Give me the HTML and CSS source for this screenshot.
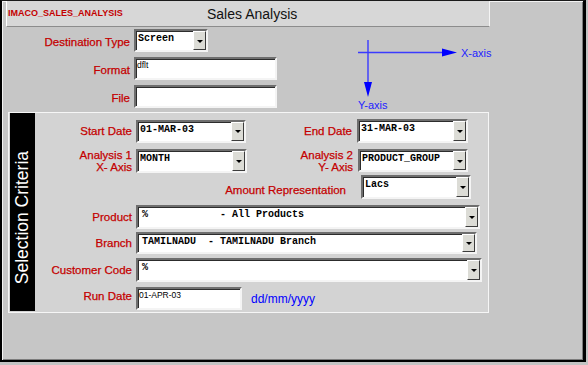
FILE: index.html
```html
<!DOCTYPE html>
<html lang="en">
<head>
  <meta charset="UTF-8" />
  <title>Sales Analysis</title>
  <link rel="stylesheet" href="styles.css">
</head>
<body>
  <div class="window">
    <div class="titlebar">
      <span class="form-id">IMACO_SALES_ANALYSIS</span>
      <span class="form-title">Sales Analysis</span>
    </div>

    <div class="top">
      <div class="fields">
        <label class="lbl">Destination Type</label>
        <div class="combo combo-dest"><span class="value">Screen</span><span class="drop"></span></div>
        <label class="lbl">Format</label>
        <div class="text text-file"><span class="small-value">dflt</span></div>
        <label class="lbl">File</label>
        <div class="text text-file"></div>
      </div>

      <svg class="axes" width="150" height="78" viewBox="0 0 150 78">
        <line x1="8" y1="18.5" x2="93" y2="18.5" stroke="#3a3aff" stroke-width="1.4" />
        <polygon points="92,14.5 107,18.5 92,22.5" fill="#0000ff" />
        <line x1="18" y1="6" x2="18" y2="49" stroke="#3a3aff" stroke-width="1.4" />
        <polygon points="14,48 18,63 22,48" fill="#0000ff" />
        <text x="111" y="22.5" class="axis-label">X-axis</text>
        <text x="8" y="75" class="axis-label">Y-axis</text>
      </svg>
    </div>

    <div class="criteria">
      <div class="tab"><span>Selection Criteria</span></div>
      <div class="criteria-body">
        <div class="row">
          <label class="lbl lbl-a">Start Date</label>
          <div class="combo combo-date"><span class="value">01-MAR-03</span><span class="drop"></span></div>
          <label class="lbl lbl-b">End Date</label>
          <div class="combo combo-date2"><span class="value">31-MAR-03</span><span class="drop"></span></div>
        </div>
        <div class="row">
          <label class="lbl lbl-a lbl-2line">Analysis 1<br>X- Axis</label>
          <div class="combo combo-axis"><span class="value">MONTH</span><span class="drop"></span></div>
          <label class="lbl lbl-b lbl-2line">Analysis 2<br>Y- Axis</label>
          <div class="combo combo-axis2"><span class="value">PRODUCT_GROUP</span><span class="drop"></span></div>
        </div>
        <div class="row">
          <label class="lbl lbl-amount">Amount Representation</label>
          <div class="combo combo-unit"><span class="value">Lacs</span><span class="drop"></span></div>
        </div>
        <div class="row">
          <label class="lbl lbl-a">Product</label>
          <div class="combo combo-product"><span class="value wide">%            - All Products</span><span class="drop"></span></div>
        </div>
        <div class="row">
          <label class="lbl lbl-a">Branch</label>
          <div class="combo combo-branch"><span class="value wide">TAMILNADU  - TAMILNADU Branch</span><span class="drop"></span></div>
        </div>
        <div class="row">
          <label class="lbl lbl-a">Customer Code</label>
          <div class="combo combo-customer"><span class="value wide">%</span><span class="drop"></span></div>
        </div>
        <div class="row">
          <label class="lbl lbl-a lbl-run">Run Date</label>
          <div class="text text-date"><span class="small-value">01-APR-03</span></div>
          <span class="hint">dd/mm/yyyy</span>
        </div>
      </div>
    </div>
  </div>
</body>
</html>
```

FILE: styles.css
```css
body {
  margin: 0;
  background: #c3c3c3;
  font-family: "Liberation Sans", Arial, sans-serif;
}
.window {
  width: 586px;
  height: 362px;
  box-sizing: border-box;
  background: #c6c6c6;
  border-top: 1px solid #1a1a1a;
  border-left: 2px solid #000;
  border-right: 3px solid #000;
  border-bottom: 2px solid #000;
  box-shadow: inset 1px 1px 0 #f2f2f2, inset -1px -1px 0 #7c7c7c;
}

/* title strip */
.titlebar {
  display: flex;
  align-items: center;
  margin-left: 4px;
  width: 484px;
  height: 26px;
  box-sizing: border-box;
  background: #d7d7d7;
  border-left: 1px solid #fff;
  border-right: 1px solid #f4f4f4;
  border-bottom: 1px solid #8c8c8c;
}
.form-id {
  width: 200px;
  padding-left: 1px;
  box-sizing: border-box;
  font-size: 9px;
  font-weight: bold;
  color: #c40000;
  margin-top: -2px;
}
.form-title {
  font-size: 14px;
  color: #111;
}

/* destination fields */
.top {
  display: flex;
  height: 85px;
}
.fields {
  display: grid;
  grid-template-columns: 128px 143px;
  grid-auto-rows: 23px;
  column-gap: 4px;
  row-gap: 5px;
  padding-top: 2px;
  align-content: start;
  align-items: center;
}
.fields .lbl {
  padding-top: 3px;
}
.axes {
  margin-left: 73px;
  margin-top: 7px;
}
.axis-label {
  font-family: "Liberation Sans", Arial, sans-serif;
  font-size: 11px;
  fill: #1e1eff;
}

.lbl {
  color: #c40000;
  font-size: 11.5px;
  text-align: right;
  flex: none;
  -webkit-text-stroke: 0.25px #c40000;
}
.lbl-2line {
  line-height: 11.5px;
  padding-top: 2px;
}

/* controls */
.combo, .text {
  display: flex;
  box-sizing: border-box;
  background: #fff;
  border: 2px solid;
  border-color: #6e6e6e #f4f4f4 #f4f4f4 #6e6e6e;
  box-shadow: inset 1px 1px 0 #2c2c2c;
  flex: none;
}
.combo .value {
  flex: 1;
  padding: 2px 0 0 2px;
  font-family: "Liberation Mono", "Courier New", monospace;
  font-weight: bold;
  font-size: 10px;
  line-height: 11px;
  color: #000;
  white-space: pre;
}
.combo .value.wide {
  padding-left: 4px;
}
.drop {
  width: 13px;
  box-sizing: border-box;
  background: #dcdcd6;
  border: 1px solid;
  border-color: #fff #3c3c3c #3c3c3c #fff;
  display: flex;
  align-items: center;
  justify-content: center;
}
.drop::after {
  content: "";
  border-left: 3px solid transparent;
  border-right: 3px solid transparent;
  border-top: 3px solid #000;
  margin-top: 1px;
}
.small-value {
  padding: 1px 0 0 1px;
  font-size: 8.5px;
  color: #000;
}

.combo-dest { width: 74px; height: 23px; }
.text-file { width: 143px; height: 23px; }

/* selection criteria panel */
.criteria {
  display: flex;
  margin-left: 6px;
  width: 481px;
  height: 201px;
  box-sizing: border-box;
  border: 1px solid #f6f6f6;
  background: #d3d3d3;
  padding: 0 0 1px 1px;
}
.tab {
  width: 25px;
  background: #000;
  color: #fff;
  display: flex;
  align-items: center;
  justify-content: center;
}
.tab span {
  writing-mode: vertical-rl;
  transform: rotate(180deg);
  font-size: 17.5px;
  white-space: nowrap;
  margin-bottom: -12px;
}
.criteria-body {
  display: grid;
  grid-template-rows: 29px 27px 30px 27px 26px 29px 23px;
  align-items: start;
  padding-top: 6px;
}
.row {
  display: flex;
  align-items: center;
}
.lbl-a { width: 97px; margin-right: 4px; }
.lbl-b { width: 106px; margin-right: 5px; }
.lbl-amount { width: 311px; margin-right: 15px; padding-top: 5px; }
.lbl-run { margin-top: -5px; }

.combo-date { width: 110px; height: 23px; }
.combo-date2 { width: 111px; height: 24px; }
.combo-axis { width: 111px; height: 24px; }
.combo-axis2 { width: 110px; height: 23px; }
.combo-unit { width: 110px; height: 24px; }
.combo-product { width: 344px; height: 24px; }
.combo-branch { width: 341px; height: 22px; }
.combo-customer { width: 346px; height: 24px; }
.text-date { width: 106px; height: 23px; }

.hint {
  margin-left: 9px;
  color: #0000ff;
  font-size: 12px;
}
```
